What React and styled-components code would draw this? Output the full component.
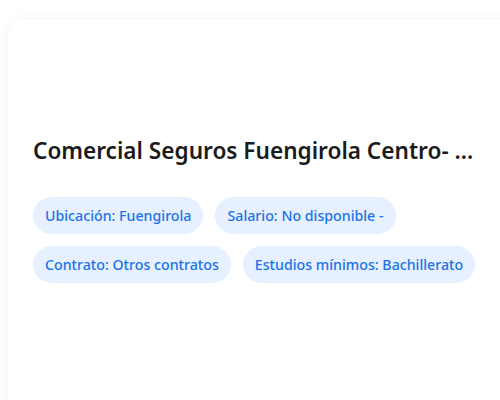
import styled, { createGlobalStyle } from "styled-components";

const GlobalStyle = createGlobalStyle`
    body {
        margin: 0;
        background: #ffffff;
        font-family: "Noto Sans", "Open Sans", sans-serif;
    }
`

const tags = [
    ["Ubicación: Fuengirola", "Salario: No disponible -"],
    ["Contrato: Otros contratos", "Estudios mínimos: Bachillerato"],
]

export default function App(){
    return(
        <>
            <GlobalStyle/>
            <Page>
                <Card>
                    <Title>Comercial Seguros Fuengirola Centro- ...</Title>
                    <Tags>
                        {tags.map((row, i) => (
                            <Row key={i}>
                                {row.map((t) => <Tag key={t}>{t}</Tag>)}
                            </Row>
                        ))}
                    </Tags>
                </Card>
            </Page>
        </>
    )
}

const Page = styled.div`
    width: 500px;
    height: 400px;
    overflow: hidden;
    padding: 20px 0 0 8px;
    box-sizing: border-box;
`

const Card = styled.div`
    width: 520px;
    height: 420px;
    background: #ffffff;
    border-radius: 16px;
    box-shadow: 0 0 14px rgba(0, 0, 0, 0.05);
    padding: 116px 0 0 25px;
    box-sizing: border-box;
`

const Title = styled.h2`
    margin: 0;
    font-size: 22.6px;
    font-weight: 600;
    line-height: 30px;
    color: #1b1b1b;
    white-space: nowrap;
`

const Tags = styled.div`
    display: flex;
    flex-direction: column;
    gap: 12px;
    margin-top: 31px;
`

const Row = styled.div`
    display: flex;
    gap: 12px;
`

const Tag = styled.span`
    display: inline-flex;
    align-items: center;
    height: 37px;
    padding: 0 12px;
    border-radius: 19px;
    background: #e6f0ff;
    color: #1a73e8;
    font-size: 14.2px;
    font-weight: 500;
    white-space: nowrap;
`
